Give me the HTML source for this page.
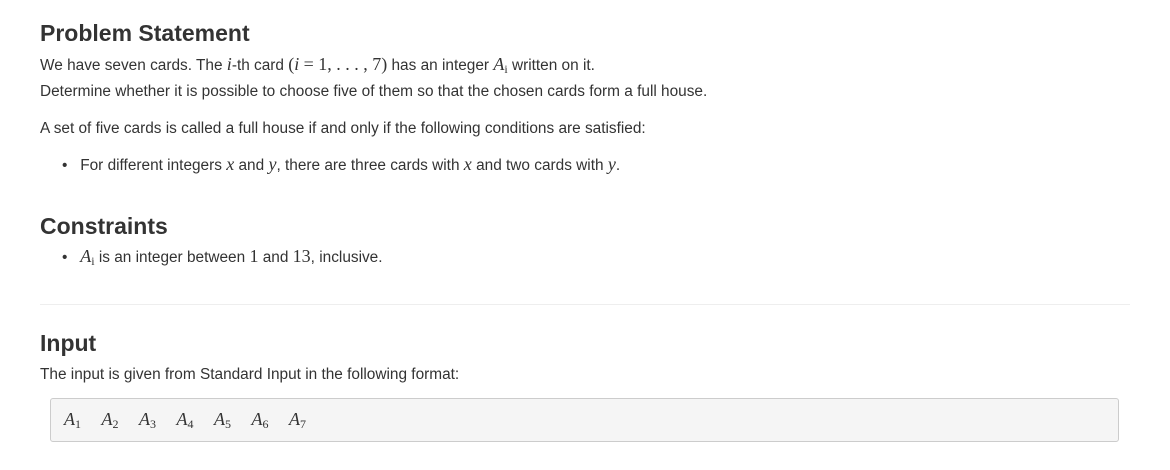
<!DOCTYPE html>
<html><head><meta charset="utf-8"><style>
body{margin:0;width:1170px;height:470px;background:#fff;font-family:"Liberation Sans",sans-serif;color:#333;position:relative;overflow:hidden}
.a{position:absolute;white-space:nowrap}
h{font-weight:bold;font-size:23px}
.t{font-size:15.4px;line-height:20px}
m{font-family:"Liberation Serif",serif;font-style:italic;font-size:18px}
r{font-family:"Liberation Serif",serif;font-size:18px}
sub{font-size:12px;font-family:"Liberation Serif",serif;font-style:normal;vertical-align:-3px;line-height:0}
.in m{display:inline-block;width:37.5px}
</style></head><body>
<div class="a" style="left:40px;top:18px;line-height:30px"><h>Problem Statement</h></div>
<div class="a t" style="left:40px;top:54px">We have seven cards. The <m>i</m>-th card <r>(</r><m>i</m> <r>= 1, . . . , 7)</r> has an integer <m>A<sub>i</sub></m> written on it.</div>
<div class="a t" style="left:40px;top:82px">Determine whether it is possible to choose five of them so that the chosen cards form a full house.</div>
<div class="a t" style="left:40px;top:119px">A set of five cards is called a full house if and only if the following conditions are satisfied:</div>
<div class="a t" style="left:62px;top:154px">•&nbsp;&nbsp; For different integers <m>x</m> and <m>y</m>, there are three cards with <m>x</m> and two cards with <m>y</m>.</div>
<div class="a" style="left:40px;top:211px;line-height:30px"><h>Constraints</h></div>
<div class="a t" style="left:62px;top:246px">•&nbsp;&nbsp; <m>A<sub>i</sub></m> is an integer between <r>1</r> and <r>13</r>, inclusive.</div>
<div class="a" style="left:40px;top:304px;width:1090px;height:1px;background:#eee"></div>
<div class="a" style="left:40px;top:328px;line-height:30px"><h>Input</h></div>
<div class="a t" style="left:40px;top:365px">The input is given from Standard Input in the following format:</div>
<div class="a" style="left:50px;top:398px;width:1067px;height:42px;background:#f5f5f5;border:1px solid #ccc;border-radius:3px"></div>
<div class="a in" style="left:64px;top:408px;line-height:22px"><m>A<sub>1</sub></m><m>A<sub>2</sub></m><m>A<sub>3</sub></m><m>A<sub>4</sub></m><m>A<sub>5</sub></m><m>A<sub>6</sub></m><m>A<sub>7</sub></m></div>
</body></html>
